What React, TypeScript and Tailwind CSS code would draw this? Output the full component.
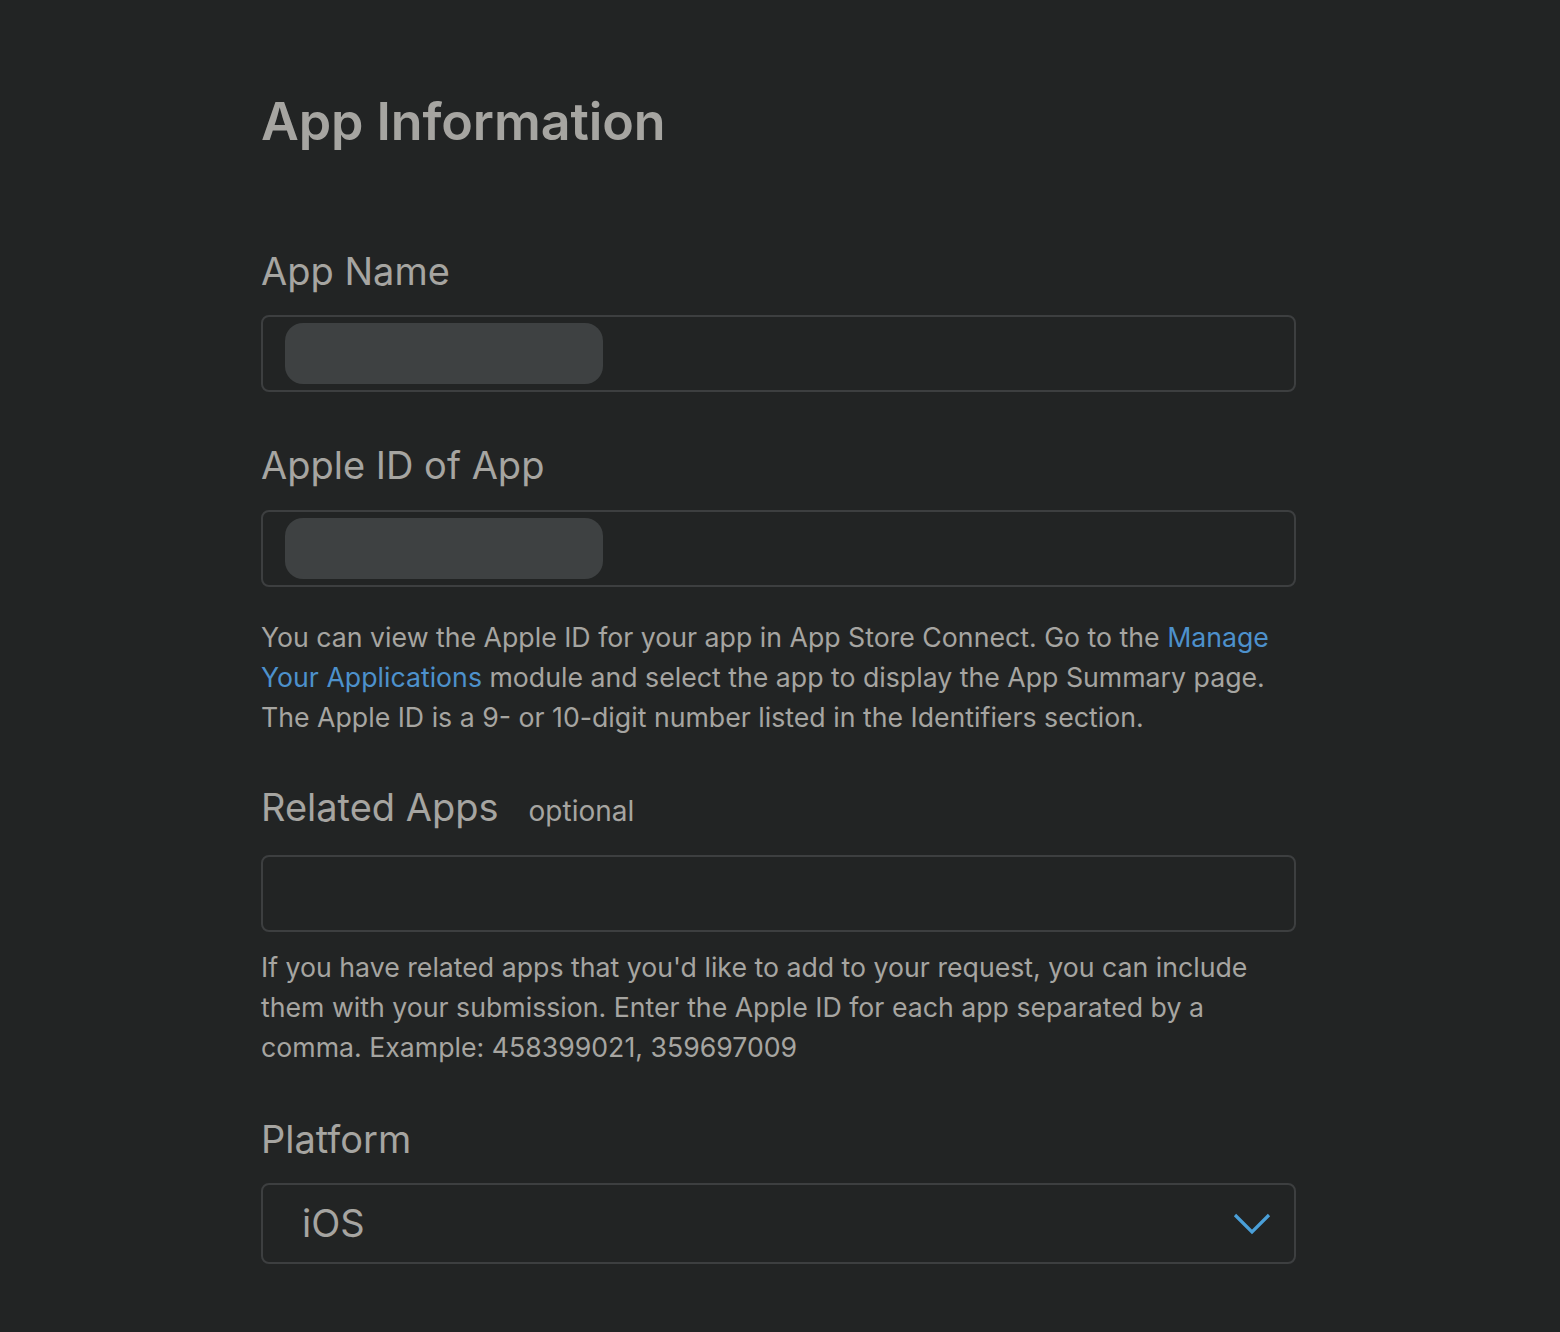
function Field({ label, optional, gap = 20, children }: { label: string; optional?: boolean; gap?: number; children: React.ReactNode }) {
  return (
    <div className="flex flex-col">
      <div className="flex items-baseline gap-[30px] text-[38px] leading-[48px] text-[#a6a5a1]">
        <span>{label}</span>
        {optional && <span className="text-[28px] leading-[48px]">optional</span>}
      </div>
      <div style={{ marginTop: gap }}>{children}</div>
    </div>
  );
}

function MaskedInput() {
  return (
    <div className="h-[77px] rounded-[8px] border-2 border-[#3d3f40] flex items-center pl-[22px]">
      <div className="h-[61px] w-[318px] rounded-[18px] bg-[#3e4142]" />
    </div>
  );
}

export default function App() {
  return (
    <div className="min-h-[1332px] bg-[#222424] font-['Inter',sans-serif] text-[#a6a5a1]">
      <div className="w-[1035px] ml-[261px] pt-[88px] pb-[66px]">
        <h1 className="text-[52px] leading-[68px] font-semibold tracking-[-0.1px]">App Information</h1>

        <div className="mt-[91px] flex flex-col">
          <Field label="App Name" gap={20}>
            <MaskedInput />
          </Field>

          <div className="mt-[49px]">
            <Field label="Apple ID of App" gap={21}>
              <MaskedInput />
            </Field>
          </div>
          <p className="mt-[30px] text-[26.7px] leading-[40px]">
            You can view the Apple ID for your app in App Store Connect. Go to the{' '}
            <span className="text-[#4d91cc]">Manage Your Applications</span> module and select the app to display the
            App Summary page. The Apple ID is a 9- or 10-digit number listed in the Identifiers section.
          </p>

          <div className="mt-[46px]">
            <Field label="Related Apps" optional gap={20}>
              <div className="h-[77px] rounded-[8px] border-2 border-[#3d3f40]" />
            </Field>
          </div>
          <p className="mt-[15px] text-[26.7px] leading-[40px]">
            If you have related apps that you'd like to add to your request, you can include them with your
            submission. Enter the Apple ID for each app separated by a comma. Example: 458399021, 359697009
          </p>

          <div className="mt-[48px]">
            <Field label="Platform" gap={20}>
              <div className="h-[81px] rounded-[8px] border-2 border-[#3d3f40] flex items-center justify-between pl-[39px] pr-[22px]">
                <span className="text-[38px]">iOS</span>
                <svg width="40" height="26" viewBox="0 0 40 26" fill="none">
                  <polyline points="3,4 20,21 37,4" stroke="#4a9fd8" strokeWidth="3.2" />
                </svg>
              </div>
            </Field>
          </div>
        </div>
      </div>
    </div>
  );
}
